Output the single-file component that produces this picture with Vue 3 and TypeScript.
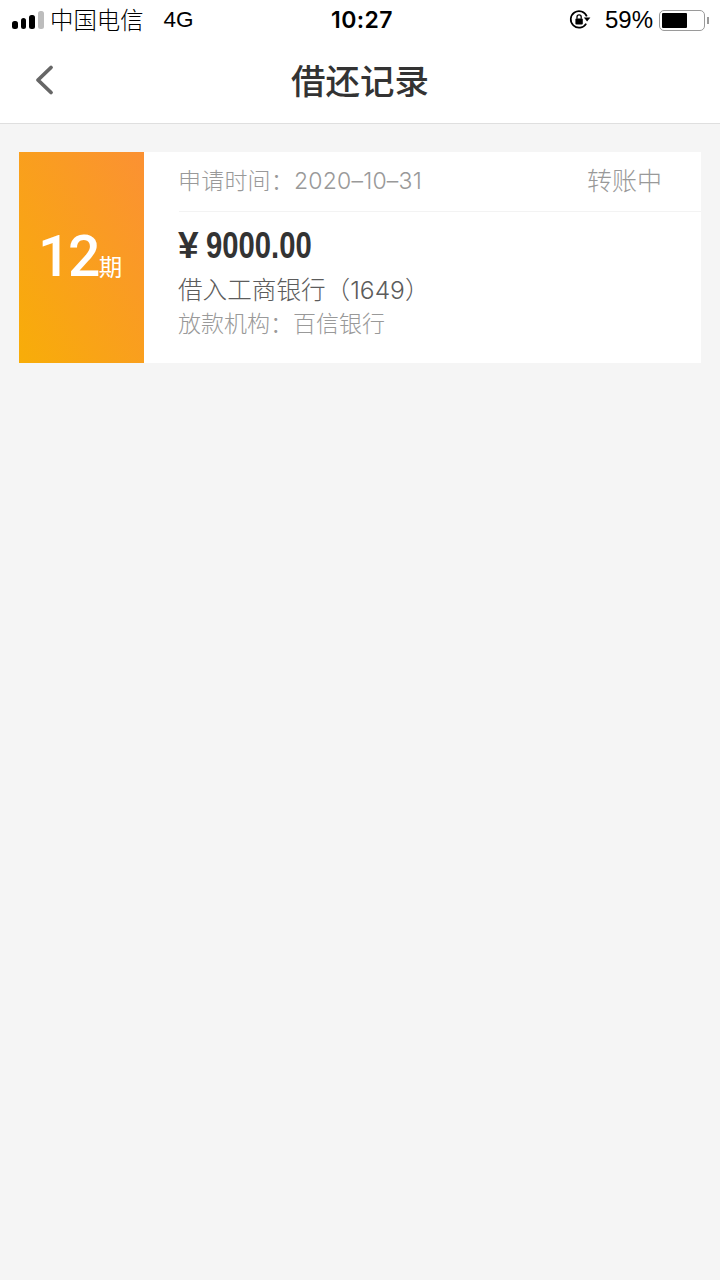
<script setup lang="ts">
const bars: number[] = [8, 11, 14, 18]
</script>

<template>
  <div class="page">
    <header class="top">
      <div class="status">
        <div class="status-left">
          <div class="signal">
            <i v-for="(h, n) in bars" :key="n" class="bar" :class="{ off: n === 3 }" :style="{ height: h + 'px' }"></i>
          </div>
          <span class="carrier">中国电信</span>
          <span class="net">4G</span>
        </div>
        <div class="clock">10:27</div>
        <div class="status-right">
          <svg class="lock" width="22" height="22" viewBox="0 0 22 22">
            <path d="M17.2 14.6A8.3 8.3 0 1 1 17.8 7.4" fill="none" stroke="#000" stroke-width="1.7" />
            <path d="M14.8 8.6h6.6l-3.3 3.8z" fill="#000" />
            <rect x="6.4" y="9.6" width="7.4" height="5.8" rx="1" fill="#000" />
            <path d="M8 9.8V8a2.1 2.1 0 0 1 4.2 0v1.8" fill="none" stroke="#000" stroke-width="1.3" />
          </svg>
          <span class="pct">59%</span>
          <div class="battery"><div class="level"></div></div>
          <i class="cap"></i>
        </div>
      </div>
      <nav class="nav">
        <svg class="back" width="24" height="32" viewBox="0 0 24 32">
          <path d="M20 3.5 7 16l13 12.5" fill="none" stroke="#666" stroke-width="3.8" stroke-linecap="round" stroke-linejoin="round" />
        </svg>
        <h1 class="title">借还记录</h1>
      </nav>
    </header>

    <main class="list">
      <article class="card">
        <div class="term"><span class="num">12</span><span class="unit">期</span></div>
        <div class="info">
          <div class="head">
            <span class="date">申请时间：2020–10–31</span>
            <span class="state">转账中</span>
          </div>
          <div class="body">
            <div class="amount"><span class="yen">¥</span><span class="figure">9000.00</span></div>
            <div class="bank">借入工商银行（1649）</div>
            <div class="org">放款机构：百信银行</div>
          </div>
        </div>
      </article>
    </main>
  </div>
</template>

<style>
html, body { margin: 0; background: #f5f5f5; }
</style>

<style scoped>
.page {
  width: 720px;
  height: 1280px;
  overflow: hidden;
  background: #f5f5f5;
  font-family: "Liberation Sans", "Noto Sans CJK SC", sans-serif;
}
.top { background: #fff; border-bottom: 1px solid #dfdfdf; }
.status {
  height: 40px;
  display: grid;
  grid-template-columns: 1fr auto 1fr;
  align-items: center;
  color: #000;
}
.status-left { display: flex; align-items: center; padding-left: 12px; }
.signal { display: flex; align-items: flex-end; gap: 3.2px; width: 32px; height: 20px; margin-top: -2px; }
.bar { width: 5.5px; background: #000; border-radius: 2.5px; display: block; }
.bar.off { background: #bdbdbd; }
.carrier { font-size: 23.4px; font-weight: 300; margin-left: 6px; margin-top: -3px; }
.net { font-size: 22.5px; margin-left: 20px; }
.clock { font-family: Inter, "Liberation Sans", sans-serif; font-size: 23px; font-weight: 600; letter-spacing: 0.4px; margin-left: 4px; }
.status-right { display: flex; align-items: center; justify-content: flex-end; padding-right: 11px; }
.lock { margin-right: 14px; }
.pct { font-size: 24px; margin-right: 6px; }
.battery {
  width: 46px;
  height: 21px;
  box-sizing: border-box;
  border: 1.5px solid #9a9a9a;
  border-radius: 5px;
  padding: 2px;
}
.level { width: 25px; height: 100%; background: #000; border-radius: 1px; }
.cap { width: 2px; height: 7px; background: #9a9a9a; margin-left: 2px; display: block; }
.nav { height: 83px; display: flex; align-items: center; justify-content: center; position: relative; }
.back { position: absolute; left: 31px; top: 24px; }
.title { margin: -6px 0 0; font-size: 34.5px; font-weight: 500; color: #333; }
.list { padding: 28px 19px; }
.card { display: flex; height: 211px; background: #fff; }
.term {
  width: 125px;
  flex: none;
  box-sizing: border-box;
  display: flex;
  align-items: baseline;
  padding: 72px 0 0 19px;
  background: linear-gradient(to top right, #f8ad08, #fb9133);
  color: #fff;
}
.num { font-family: Roboto, "Liberation Sans", sans-serif; font-size: 57px; line-height: 66px; font-weight: 500; letter-spacing: -2.5px; }
.unit { font-size: 23.5px; font-weight: 400; margin-left: 1px; }
.info { flex: 1; margin-left: 35px; display: flex; flex-direction: column; }
.head {
  height: 59px;
  border-bottom: 1px solid #f3f3f3;
  display: flex;
  align-items: center;
  justify-content: space-between;
  padding-right: 39px;
  color: #999;
}
.date { font-family: Inter, "Noto Sans CJK SC", sans-serif; font-size: 23px; font-weight: 300; letter-spacing: 0.2px; margin: -6px 0 0 -1px; }
.state { font-size: 25px; font-weight: 300; margin-top: -5px; }
.body { display: flex; flex-direction: column; }
.amount {
  margin-top: 11px;
  height: 46px;
  line-height: 46px;
  font-size: 37px;
  font-weight: 700;
  color: #333;
  white-space: nowrap;
}
.yen { margin-right: 7px; margin-left: -1px; }
.figure { display: inline-block; transform: scaleX(0.79); transform-origin: left center; }
.bank { font-family: Inter, "Noto Sans CJK SC", sans-serif; font-size: 24.6px; font-weight: 300; line-height: 34px; color: #5c5c5c; margin: 4px 0 0 -1px; }
.org { font-size: 23px; font-weight: 300; line-height: 34px; color: #999; margin-left: -1px; }
</style>
